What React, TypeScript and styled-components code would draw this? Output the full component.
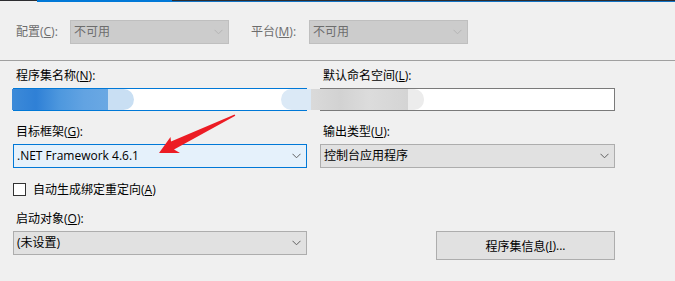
import React from "react";
import styled, { createGlobalStyle } from "styled-components";

const GlobalStyle = createGlobalStyle`
  html, body { margin: 0; padding: 0; background: #f0f0f0; }
  body {
    font-family: "Open Sans", "Noto Sans CJK SC", "Microsoft YaHei", sans-serif;
    font-size: 12px;
    color: #000;
    width: 675px;
    height: 281px;
    overflow: hidden;
  }
`;

const Window = styled.div`
  position: relative;
  width: 675px;
  height: 281px;
  background: #f0f0f0;
`;

const TopBar = styled.div`
  display: flex;
  height: 2px;
`;

const BarSeg = styled.div<{ $w?: number; $kind: "dark" | "blue" | "mixed" }>`
  ${(p) => (p.$w ? `width: ${p.$w}px;` : "flex: 1;")}
  background: ${(p) =>
    p.$kind === "blue"
      ? "#0078d7"
      : p.$kind === "dark"
      ? "linear-gradient(#2d2d30 0 1px, #f0f0f0 1px)"
      : "linear-gradient(#2d2d30 0 1px, #1373c4 1px)"};
`;

const ConfigRow = styled.div`
  display: flex;
  align-items: center;
  padding: 18px 0 16px 16px;
`;

const RowLabel = styled.span<{ $w: number; $disabled?: boolean }>`
  width: ${(p) => p.$w}px;
  flex: none;
  line-height: 16px;
  color: ${(p) => (p.$disabled ? "#6d6d6d" : "#000")};
`;

const Divider = styled.div`
  height: 1px;
  background: #a0a0a0;
`;

const Form = styled.div`
  display: flex;
  flex-direction: column;
  padding-left: 13px;
`;

const Row = styled.div<{ $top: number }>`
  display: grid;
  grid-template-columns: 294px 295px;
  column-gap: 13px;
  margin-top: ${(p) => p.$top}px;
`;

const Field = styled.div`
  display: flex;
  flex-direction: column;
  gap: 4px;
`;

const FieldLabel = styled.label`
  padding-left: 3px;
  line-height: 16px;
  white-space: nowrap;
`;

const Key = styled.u`
  text-decoration: underline;
  text-underline-offset: 1px;
`;

const TextBox = styled.div<{ $focused?: boolean }>`
  position: relative;
  box-sizing: border-box;
  height: 23px;
  background: #fff;
  border: 1px solid ${(p) => (p.$focused ? "#0078d7" : "#7a7a7a")};
`;

type ComboKind = "disabled" | "normal" | "focused";

const ComboBox = styled.div<{ $kind: ComboKind; $w?: number }>`
  box-sizing: border-box;
  display: flex;
  align-items: center;
  justify-content: space-between;
  height: 24px;
  ${(p) => (p.$w ? `width: ${p.$w}px; flex: none;` : "")}
  padding: 0 5px 0 3px;
  background: ${(p) =>
    p.$kind === "disabled" ? "#cccccc" : p.$kind === "focused" ? "#e5f1fb" : "#e1e1e1"};
  border: 1px solid
    ${(p) =>
      p.$kind === "disabled" ? "#bfbfbf" : p.$kind === "focused" ? "#0078d7" : "#adadad"};
  color: ${(p) => (p.$kind === "disabled" ? "#6d6d6d" : "#000")};
  line-height: 16px;
`;

const ComboText = styled.span`
  white-space: nowrap;
`;

const Gap = styled.div<{ $w: number }>`
  width: ${(p) => p.$w}px;
  flex: none;
`;

const CheckRow = styled.label<{ $top: number }>`
  display: flex;
  align-items: center;
  gap: 7px;
  margin-top: ${(p) => p.$top}px;
  line-height: 16px;
  height: 13px;
`;

const CheckBox = styled.span`
  box-sizing: border-box;
  width: 13px;
  height: 13px;
  background: #fff;
  border: 1px solid #333;
`;

const ButtonCell = styled.div`
  display: flex;
  justify-content: flex-end;
  padding-top: 20px;
`;

const Button = styled.div`
  box-sizing: border-box;
  width: 179px;
  height: 29px;
  display: flex;
  align-items: center;
  justify-content: center;
  background: #e1e1e1;
  border: 1px solid #adadad;
`;

const Redact = styled.div<{ $left: number; $w: number; $bg: string; $radius?: string }>`
  position: absolute;
  top: 0;
  bottom: 0;
  left: ${(p) => p.$left}px;
  width: ${(p) => p.$w}px;
  background: ${(p) => p.$bg};
  border-radius: ${(p) => p.$radius || "0"};
`;

const ArrowSvg = styled.svg`
  position: absolute;
  left: 0;
  top: 0;
  pointer-events: none;
`;

const Chevron: React.FC<{ color: string }> = ({ color }) => (
  <svg width="9" height="6" viewBox="0 0 9 6">
    <path d="M0.5 0.8 L4.5 4.8 L8.5 0.8" fill="none" stroke={color} strokeWidth="1" />
  </svg>
);

export default function App() {
  return (
    <Window>
      <GlobalStyle />
      <TopBar>
        <BarSeg $w={37} $kind="dark" />
        <BarSeg $w={135} $kind="blue" />
        <BarSeg $kind="mixed" />
      </TopBar>

      <ConfigRow>
        <RowLabel $w={54} $disabled>
          配置(<Key>C</Key>):
        </RowLabel>
        <ComboBox $kind="disabled" $w={159}>
          <ComboText>不可用</ComboText>
          <Chevron color="#b4b4b4" />
        </ComboBox>
        <Gap $w={22} />
        <RowLabel $w={58} $disabled>
          平台(<Key>M</Key>):
        </RowLabel>
        <ComboBox $kind="disabled" $w={159}>
          <ComboText>不可用</ComboText>
          <Chevron color="#b4b4b4" />
        </ComboBox>
      </ConfigRow>
      <Divider />

      <Form>
        <Row $top={7}>
          <Field>
            <FieldLabel>
              程序集名称(<Key>N</Key>):
            </FieldLabel>
            <TextBox $focused>
              <Redact
                $left={-2}
                $w={96}
                $bg="linear-gradient(90deg, #3d8ad8 0%, #2f80d6 25%, #4e98de 50%, #62a3e2 75%, #6aa8e3 100%)"
              />
              <Redact $left={94} $w={26} $bg="#c9dff3" $radius="0 12px 12px 0" />
              <Redact $left={267} $w={30} $bg="#dbe9f6" $radius="12px 0 0 12px" />
            </TextBox>
          </Field>
          <Field>
            <FieldLabel>
              默认命名空间(<Key>L</Key>):
            </FieldLabel>
            <TextBox>
              <Redact
                $left={-10}
                $w={97}
                $bg="linear-gradient(90deg, #dadada 0%, #d2d2d2 30%, #dcdcdc 60%, #d4d4d4 100%)"
              />
              <Redact $left={87} $w={16} $bg="#ececec" $radius="0 10px 10px 0" />
            </TextBox>
          </Field>
        </Row>

        <Row $top={13}>
          <Field>
            <FieldLabel>
              目标框架(<Key>G</Key>):
            </FieldLabel>
            <ComboBox $kind="focused">
              <ComboText>.NET Framework 4.6.1</ComboText>
              <Chevron color="#606060" />
            </ComboBox>
          </Field>
          <Field>
            <FieldLabel>
              输出类型(<Key>U</Key>):
            </FieldLabel>
            <ComboBox $kind="normal">
              <ComboText>控制台应用程序</ComboText>
              <Chevron color="#606060" />
            </ComboBox>
          </Field>
        </Row>

        <CheckRow $top={15}>
          <CheckBox />
          <span>
            自动生成绑定重定向(<Key>A</Key>)
          </span>
        </CheckRow>

        <Row $top={15}>
          <Field>
            <FieldLabel>
              启动对象(<Key>O</Key>):
            </FieldLabel>
            <ComboBox $kind="normal">
              <ComboText>(未设置)</ComboText>
              <Chevron color="#606060" />
            </ComboBox>
          </Field>
          <ButtonCell>
            <Button>
              程序集信息(<Key>I</Key>)...
            </Button>
          </ButtonCell>
        </Row>
      </Form>

      <ArrowSvg width="675" height="281" viewBox="0 0 675 281">
        <polygon
          points="159,153 170.5,137 171,141.6 234.6,114.4 235.3,115.8 174,149.4 180,153"
          fill="#ec1c24"
        />
      </ArrowSvg>
    </Window>
  );
}
